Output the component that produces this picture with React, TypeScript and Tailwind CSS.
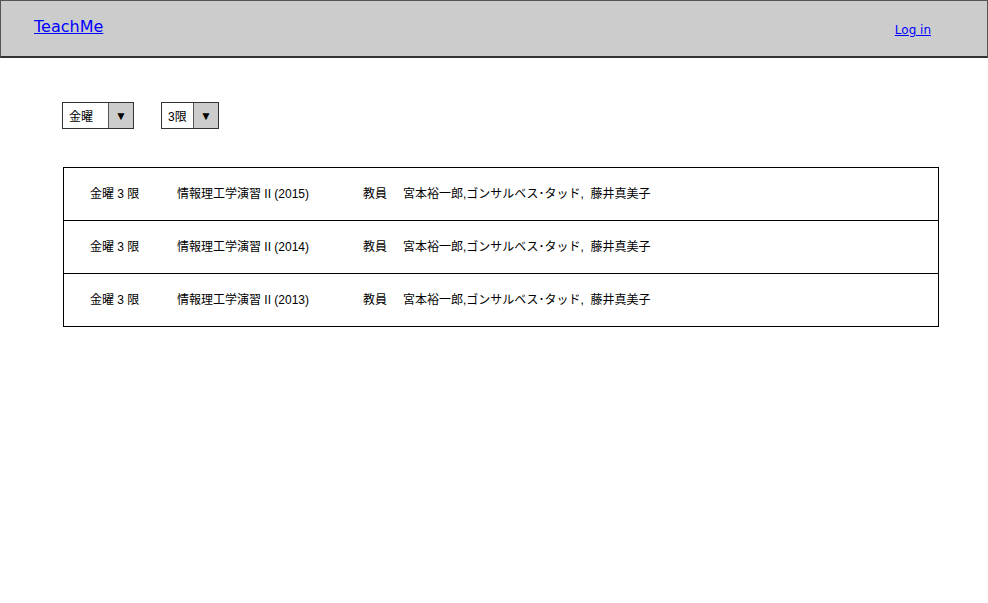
import React from "react";

const rows = ["2015", "2014", "2013"];

function Select({ label, w }: { label: string; w: string }) {
  return (
    <div className={`flex h-[27px] border border-[#333] bg-white ${w}`}>
      <div className="flex flex-1 items-center pl-[6px] pt-[3px] text-[12px] text-black">{label}</div>
      <div className="flex w-[25px] items-center justify-center border-l border-[#555] bg-[#cccccc] pt-[1px] text-[12px] text-black">▼</div>
    </div>
  );
}

export default function App() {
  return (
    <div className="min-h-[603px] w-[988px] bg-white" style={{ fontFamily: '"Liberation Sans", "Noto Sans CJK JP", sans-serif' }}>
      <header className="flex h-[58px] items-start justify-between border border-[#555] border-b-2 border-b-[#333] bg-[#cccccc] pl-[33px] pr-[56px]">
        <a href="#" className="mt-[14px] text-[16px] text-[#0000ff] underline" style={{ fontFamily: '"DejaVu Sans", sans-serif' }}>
          TeachMe
        </a>
        <a href="#" className="mt-[20px] text-[12px] text-[#0000ff] underline" style={{ fontFamily: '"DejaVu Sans", sans-serif' }}>
          Log in
        </a>
      </header>
      <div className="flex gap-[27px] pl-[62px] pt-[44px]">
        <Select label="金曜" w="w-[72px]" />
        <Select label="3限" w="w-[58px]" />
      </div>
      <div className="ml-[63px] mt-[38px] w-[876px] border border-black">
        {rows.map((y, i) => (
          <div key={y} className={`flex items-center pl-[26px] pb-[1px] text-[12px] text-black ${i > 0 ? "h-[53px] border-t border-black" : "h-[52px]"}`}>
            <span className="w-[87px]">金曜 3 限</span>
            <span className="w-[186px]">情報理工学演習 II ({y})</span>
            <span className="w-[40px]">教員</span>
            <span>宮本裕一郎,ゴンサルベス･タッド,&nbsp;&nbsp;藤井真美子</span>
          </div>
        ))}
      </div>
    </div>
  );
}
